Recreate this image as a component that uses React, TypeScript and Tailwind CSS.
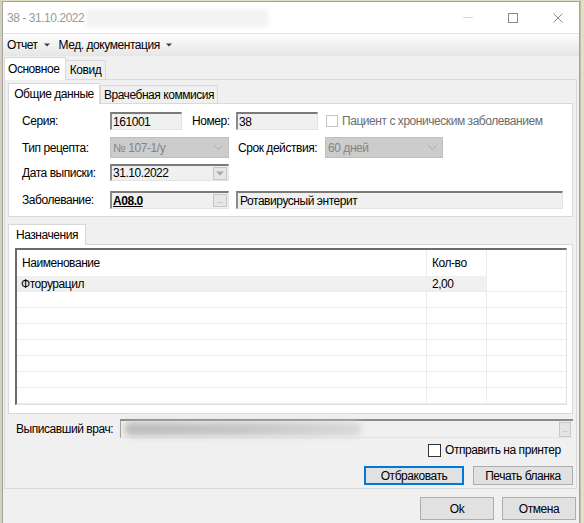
import React from 'react';

const sunken =
  'border-t-2 border-l-2 border-t-[#7a7a7a] border-l-[#8c8c8c] border-r border-b border-r-[#e3e3e3] border-b-[#e3e3e3] bg-[#f0f0f0]';

const Chevron: React.FC = () => (
  <svg width="9" height="5" viewBox="0 0 9 5" className="shrink-0">
    <polyline points="0.5,0.5 4.5,4.5 8.5,0.5" fill="none" stroke="#a8a8a8" strokeWidth="1" />
  </svg>
);

const MenuArrow: React.FC = () => (
  <svg width="6" height="4" viewBox="0 0 6 4" className="ml-[6px] shrink-0">
    <path d="M0 0.5 L6 0.5 L3 3.5 Z" fill="#3c3c3c" />
  </svg>
);

const Combo: React.FC<{ value: string; w: string }> = ({ value, w }) => (
  <div className={`${w} h-[21px] bg-[#cccccc] border border-[#bfbfbf] flex items-center pl-[2px] pr-[5px] text-[#848484]`}>
    <span className="flex-1">{value}</span>
    <Chevron />
  </div>
);

const SmallBtn: React.FC<{ children?: React.ReactNode }> = ({ children }) => (
  <div className="w-[14px] h-[13px] bg-[#e6e6e6] border border-[#c6c6c6] flex items-center justify-center text-[#b0b0b0] text-[9px] leading-none shrink-0">
    {children}
  </div>
);

const Label: React.FC<{ w: string; children: React.ReactNode }> = ({ w, children }) => (
  <span className={`${w} shrink-0`}>{children}</span>
);

const Tab: React.FC<{ label: string; active?: boolean; w: string }> = ({ label, active, w }) =>
  active ? (
    <div className={`${w} h-[21px] -mb-px relative z-10 bg-white border border-b-0 border-[#d9d9d9] flex items-center justify-center`}>
      {label}
    </div>
  ) : (
    <div className={`${w} h-[18px] bg-[#f0f0f0] border border-b-0 border-[#d9d9d9] flex items-center justify-center`}>
      {label}
    </div>
  );

const Btn: React.FC<{ label: string; w: string; h: string; focused?: boolean }> = ({ label, w, h, focused }) => (
  <div
    className={`${w} ${h} bg-[#e1e1e1] flex items-center justify-center ${
      focused ? 'border-2 border-[#0078d7]' : 'border border-[#adadad]'
    }`}
  >
    {label}
  </div>
);

const emptyRows = [0, 1, 2, 3, 4, 5, 6];

export default function App() {
  return (
    <div className="w-[584px] h-[523px] overflow-hidden flex bg-[#e2dfc3] font-['Liberation_Sans',Arial,sans-serif] text-[12px] leading-none text-black tracking-[-0.45px]">
      <div className="w-[2px] h-full bg-[#d4d0bb] shrink-0" />
      <div className="w-[578px] h-[522px] mt-[1px] border border-b-0 border-[#a3a3a3] bg-[#f0f0f0] flex flex-col shrink-0">
        {/* title bar */}
        <div className="h-[31px] bg-white flex items-center pl-[4px] shrink-0">
          <span className="text-[#9a9a9a]">38 - 31.10.2022</span>
          <div className="ml-[2px] w-[182px] h-[18px] bg-[#f3f3f3] blur-[2px]" />
          <div className="ml-auto flex items-center gap-[35px] pr-[16px]">
            <div className="w-[10px] h-px bg-[#d6d6d6]" />
            <div className="w-[10px] h-[10px] border border-[#8a8a8a]" />
            <svg width="10" height="10" viewBox="0 0 10 10">
              <path d="M0.5 0.5 L9.5 9.5 M9.5 0.5 L0.5 9.5" stroke="#8a8a8a" strokeWidth="1" />
            </svg>
          </div>
        </div>

        {/* menu bar */}
        <div className="h-[23px] border-t border-[#e3e3e3] bg-linear-to-b from-[#fdfdfd] to-[#e6e6e6] flex items-center pl-[4px] shrink-0">
          <span>Отчет</span>
          <MenuArrow />
          <span className="ml-[9px]">Мед. документация</span>
          <MenuArrow />
        </div>

        {/* body */}
        <div className="flex-1 flex flex-col pl-[1px]">
          <div className="mt-[1px] h-[22px] flex items-end">
            <div className="w-[62px] h-[23px] -mb-px relative z-10 bg-white border border-b-0 border-[#d9d9d9] flex items-center pl-[3px]">
              Основное
            </div>
            <div className="w-[40px] h-[19px] bg-[#f0f0f0] border border-l-0 border-b-0 border-[#d9d9d9] flex items-center justify-center">
              Ковид
            </div>
          </div>

          {/* outer page */}
          <div className="w-[573px] h-[410px] border border-[#d9d9d9] bg-[#f0f0f0] flex flex-col pl-[3px]">
            <div className="mt-[3px] h-[20px] flex items-end">
              <Tab label="Общие данные" active w="w-[92px]" />
              <Tab label="Врачебная коммисия" w="w-[118px]" />
            </div>

            {/* general data */}
            <div className="w-[565px] h-[114px] bg-white border border-[#d9d9d9] flex flex-col pl-[13px] pt-[8px]">
              <div className="h-[18px] flex items-center">
                <Label w="w-[88px]">Серия:</Label>
                <div className={`w-[72px] h-[18px] ${sunken} flex items-center pl-px`}>161001</div>
                <span className="ml-[10px] w-[44px] shrink-0">Номер:</span>
                <div className={`w-[82px] h-[18px] ${sunken} flex items-center pl-px`}>38</div>
                <div className="ml-[8px] w-[12px] h-[12px] border border-[#c4c4c4] bg-white shrink-0" />
                <span className="ml-[4px] text-[#6d6d6d]">Пациент с хроническим заболеванием</span>
              </div>
              <div className="mt-[7px] h-[21px] flex items-center">
                <Label w="w-[88px]">Тип рецепта:</Label>
                <Combo value="№ 107-1/у" w="w-[119px]" />
                <span className="ml-[9px] w-[87px] shrink-0">Срок действия:</span>
                <Combo value="60 дней" w="w-[118px]" />
              </div>
              <div className="mt-[6px] h-[17px] flex items-center">
                <Label w="w-[88px]">Дата выписки:</Label>
                <div className={`w-[119px] h-[17px] ${sunken} flex items-center pl-px pr-px`}>
                  <span className="flex-1">31.10.2022</span>
                  <SmallBtn>
                    <svg width="8" height="5" viewBox="0 0 8 5">
                      <path d="M0 0.5 L8 0.5 L4 4.5 Z" fill="#a9a9a9" />
                    </svg>
                  </SmallBtn>
                </div>
              </div>
              <div className="mt-[10px] h-[18px] flex items-center">
                <Label w="w-[88px]">Заболевание:</Label>
                <div className={`w-[119px] h-[18px] ${sunken} flex items-center pl-px pr-px`}>
                  <span className="flex-1 font-bold underline">A08.0</span>
                  <SmallBtn>...</SmallBtn>
                </div>
                <div className={`ml-[7px] w-[327px] h-[18px] ${sunken} flex items-center pl-[2px]`}>
                  Ротавирусный энтерит
                </div>
              </div>
            </div>

            {/* prescriptions */}
            <div className="mt-[7px] h-[20px] flex items-end">
              <Tab label="Назначения" active w="w-[78px]" />
            </div>
            <div className="w-[565px] h-[170px] bg-white border border-[#d9d9d9] pl-[6px] pt-[3px]">
              <div className="w-[552px] h-[157px] border-t-2 border-l-2 border-[#6b6b6b] border-r border-b border-r-[#e0e0e0] border-b-[#e0e0e0] bg-white flex flex-col">
                <div className="h-[26px] grid grid-cols-[410px_60px_1fr]">
                  <div className="border-r border-[#ececec] flex items-center pl-[5px]">Наименование</div>
                  <div className="border-r border-[#ececec] flex items-center pl-[5px]">Кол-во</div>
                  <div />
                </div>
                <div className="h-[16px] grid grid-cols-[410px_60px_1fr]">
                  <div className="bg-[#f0f0f0] border-r border-b border-[#ececec] flex items-center pl-[4px]">Фторурацил</div>
                  <div className="bg-[#f0f0f0] border-r border-b border-[#ececec] flex items-center pl-[5px]">2,00</div>
                  <div className="border-b border-[#ececec]" />
                </div>
                {emptyRows.map((r) => (
                  <div key={r} className="h-[16px] grid grid-cols-[410px_60px_1fr]">
                    <div className="border-r border-b border-[#ececec]" />
                    <div className="border-r border-b border-[#ececec]" />
                    <div className="border-b border-[#ececec]" />
                  </div>
                ))}
              </div>
            </div>

            {/* doctor */}
            <div className="mt-[5px] h-[19px] flex items-center">
              <span className="ml-[8px] w-[104px] shrink-0">Выписавший врач:</span>
              <div className="w-[453px] h-[19px] border-t-2 border-t-[#8a8a8a] border-l border-l-[#a0a0a0] border-b border-b-[#e3e3e3] bg-[#f0f0f0] flex items-center pr-[2px]">
                <div className="w-[238px] h-[14px] ml-[3px] rounded-full bg-linear-to-r from-[#bdbdbd] via-[#c6c6c6] to-[#d9d9d9] blur-[3px]" />
                <div className="flex-1" />
                <div className="w-[12px] h-[15px] bg-[#e4e4e4] border border-[#c8c8c8] flex items-end justify-center pb-[2px] text-[#b0b0b0] text-[8px]">
                  ...
                </div>
              </div>
            </div>

            <div className="mt-[5px] h-[14px] flex items-center">
              <div className="ml-[420px] w-[13px] h-[13px] border border-[#333333] bg-white shrink-0" />
              <span className="ml-[4px]">Отправить на принтер</span>
            </div>

            <div className="mt-[9px] flex">
              <div className="ml-[356px]">
                <Btn label="Отбраковать" w="w-[100px]" h="h-[19px]" focused />
              </div>
              <div className="ml-[9px]">
                <Btn label="Печать бланка" w="w-[100px]" h="h-[19px]" />
              </div>
            </div>
          </div>

          <div className="mt-[8px] flex ml-[416px] gap-[8px]">
            <Btn label="Ok" w="w-[74px]" h="h-[23px]" />
            <Btn label="Отмена" w="w-[74px]" h="h-[23px]" />
          </div>
        </div>
      </div>
      <div className="flex-1 h-full border-l border-[#c2bea2]" />
    </div>
  );
}
